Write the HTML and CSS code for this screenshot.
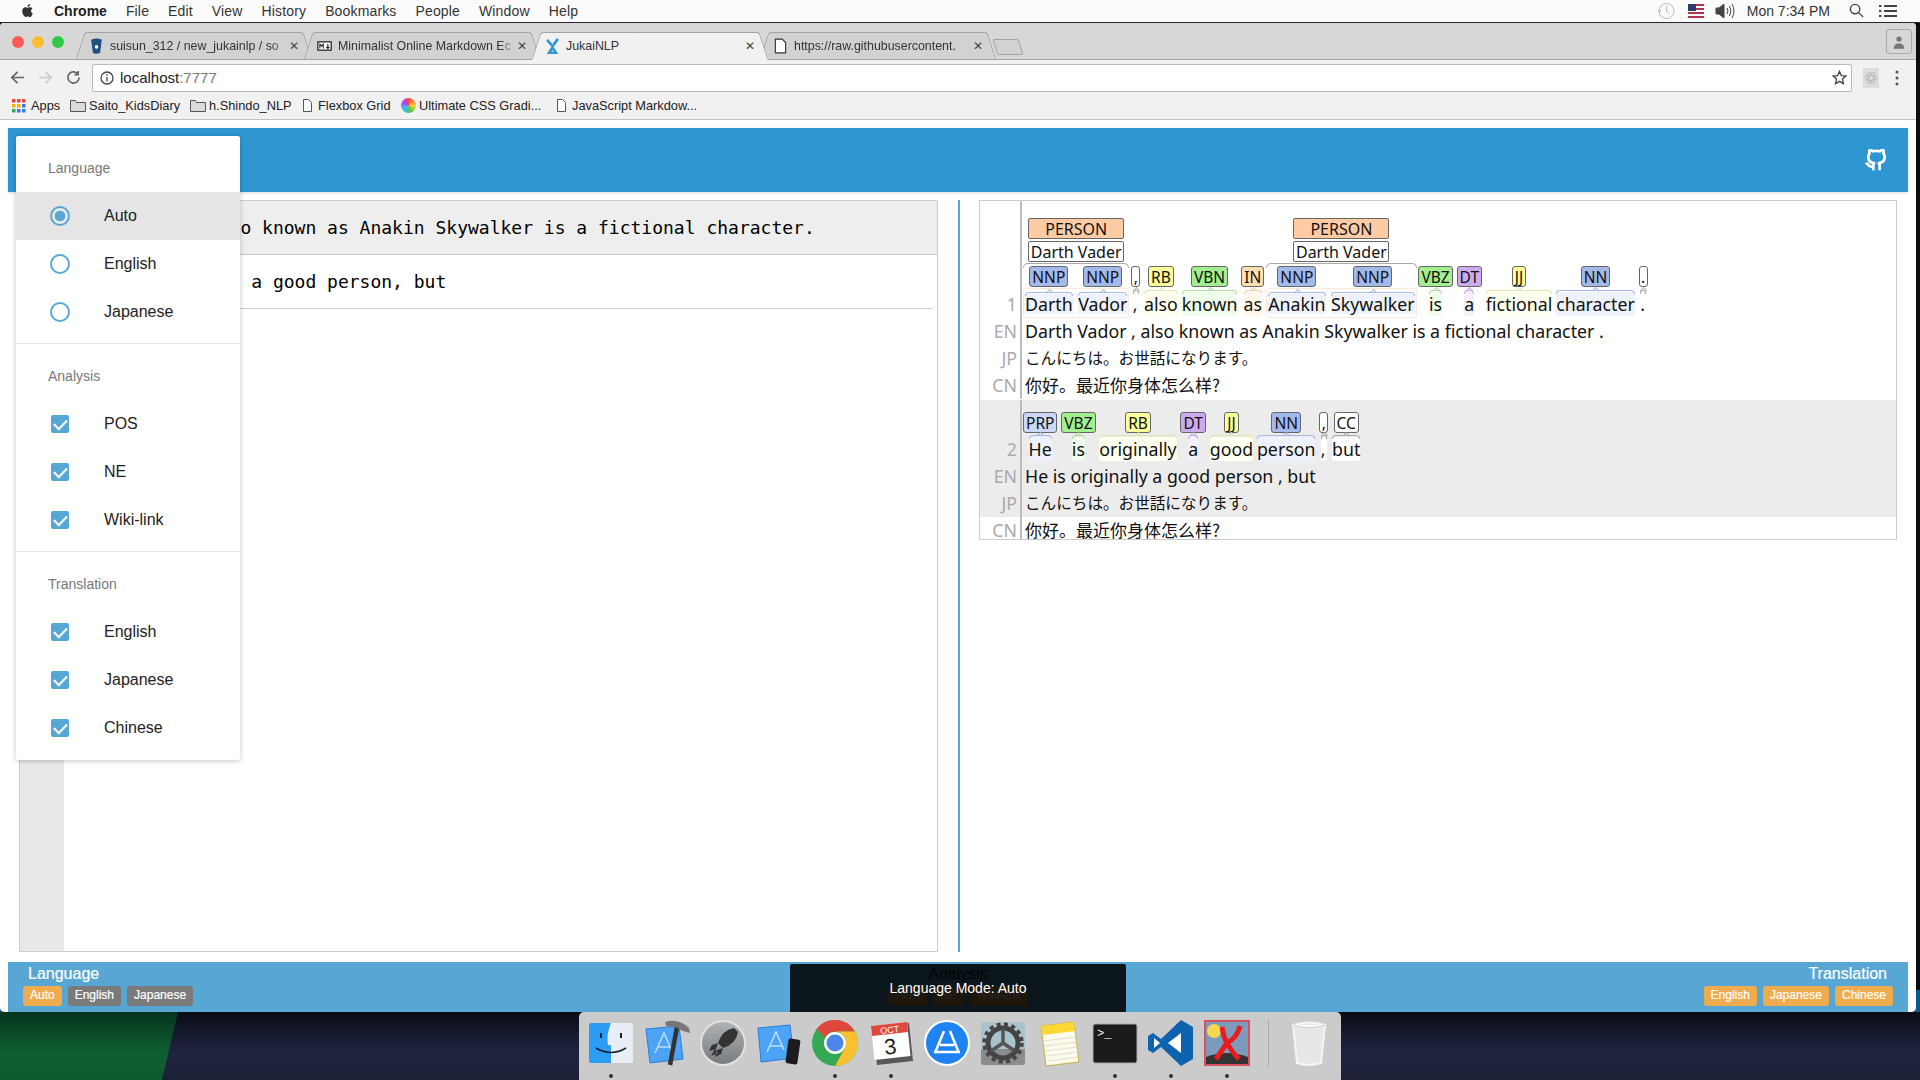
FILE: index.html
```html
<!DOCTYPE html>
<html lang="en">
<head>
    <meta charset="UTF-8">
    <meta name="viewport" content="width=device-width, initial-scale=1.0">
    <title>JukaiNLP</title>
    <link rel="stylesheet" href="styles.css">
</head>
<body>
    <!-- mac menu bar -->
    <div class="menubar">
        <svg class="apple" viewBox="0 0 24 24"><path d="M12.152 6.896c-.948 0-2.415-1.078-3.96-1.04-2.04.027-3.91 1.183-4.961 3.014-2.117 3.675-.546 9.103 1.519 12.09 1.013 1.454 2.208 3.09 3.792 3.039 1.52-.065 2.09-.987 3.935-.987 1.831 0 2.35.987 3.96.948 1.637-.026 2.676-1.48 3.676-2.948 1.156-1.688 1.636-3.325 1.662-3.415-.039-.013-3.182-1.221-3.22-4.857-.026-3.04 2.48-4.494 2.597-4.559-1.429-2.09-3.623-2.324-4.39-2.376-2-.156-3.675 1.09-4.61 1.09zM15.53 3.83c.843-1.012 1.4-2.427 1.245-3.83-1.207.052-2.662.805-3.532 1.818-.78.896-1.454 2.338-1.273 3.714 1.338.104 2.715-.688 3.559-1.701"/></svg>
        <b class="menu-app">Chrome</b>
        <span>File</span><span>Edit</span><span>View</span><span>History</span><span>Bookmarks</span><span>People</span><span>Window</span><span>Help</span>
        <div class="menu-status">
            <svg class="st-clock" viewBox="0 0 18 18"><circle cx="9.5" cy="9" r="7.5"/><path d="M9.5 4v5.5l3 2M1 8l1.5 2L4 8"/></svg>
            <svg class="st-flag" viewBox="0 0 16 14"><rect width="16" height="14" fill="#fff"/><path d="M0 1h16M0 5h16M0 9h16M0 13h16" stroke="#b5314a" stroke-width="2"/><rect width="8" height="7" fill="#33386e"/></svg>
            <svg class="st-vol" viewBox="0 0 20 16"><path class="fill" d="M1 5h3l5-4v14l-5-4H1z"/><path d="M12 5q2 3 0 6M14.500 3q3 5 0 10M17 1q4 7 0 14"/></svg>
            <span class="st-time">Mon 7:34 PM</span>
            <svg class="st-search" viewBox="0 0 16 16"><circle cx="6.500" cy="6.500" r="5"/><path d="M10 10l5 5"/></svg>
            <svg class="st-list" viewBox="0 0 18 14"><path d="M5 2h13M5 7h13M5 12h13M0 2h2.500M0 7h2.500M0 12h2.500"/></svg>
        </div>
    </div>

    <div class="window">
        <!-- chrome tabs -->
        <div class="tabstrip">
            <div class="lights"><i class="red"></i><i class="yellow"></i><i class="green"></i></div>
            <div class="tab">
                <svg class="favicon" viewBox="0 0 14 18"><path d="M1 2q6-3 12 0l-2 15q-4 1.500-8 0z" fill="#205081"/><circle cx="7" cy="10" r="2" fill="#fff"/></svg>
                <span class="tab-title fade">suisun_312 / new_jukainlp / so</span><span class="tab-x">&#10005;</span>
            </div>
            <div class="tab">
                <svg class="favicon" viewBox="0 0 18 12"><rect x="1" y="1" width="16" height="10" fill="#fff" stroke="#222" stroke-width="1.500"/><path d="M3.500 9V4l2 2 2-2v5M13 3.500v5M11 7l2 2 2-2" fill="none" stroke="#222" stroke-width="1.300"/></svg>
                <span class="tab-title fade">Minimalist Online Markdown Ec</span><span class="tab-x">&#10005;</span>
            </div>
            <div class="tab active">
                <svg class="favicon" viewBox="0 0 16 18"><path d="M2 2l5 6M14 1L9 8M8 8v3M4 17l4-6 4 6z" fill="none" stroke="#2e97d1" stroke-width="3"/></svg>
                <span class="tab-title">JukaiNLP</span><span class="tab-x">&#10005;</span>
            </div>
            <div class="tab">
                <svg class="favicon file" viewBox="0 0 11 14"><path d="M1 1h6l3 3v9H1z"/></svg>
                <span class="tab-title fade">https://raw.githubusercontent.</span><span class="tab-x">&#10005;</span>
            </div>
            <div class="newtab"></div>
            <div class="profile">
                <svg viewBox="0 0 16 20"><circle cx="8" cy="6" r="3.500"/><path d="M1 19q0-7 7-7t7 7z"/></svg>
            </div>
        </div>

        <!-- toolbar -->
        <div class="toolbar">
            <svg class="nav" viewBox="0 0 16 16"><path d="M15 8H2M8 2L2 8l6 6"/></svg>
            <svg class="nav off" viewBox="0 0 16 16"><path d="M1 8h13M8 2l6 6-6 6"/></svg>
            <svg class="nav" viewBox="0 0 16 16"><path d="M14 8a6 6 0 1 1-2-4.500M13 1v4H9"/></svg>
            <div class="omnibox">
                <svg class="info" viewBox="0 0 14 14"><circle cx="7" cy="7" r="6"/><path d="M7 6v4.500M7 3.200v1.500"/></svg>
                <span class="url">localhost<span class="url-port">:7777</span></span>
                <svg class="star" viewBox="0 0 16 16"><path d="M8 1.500l2 4.500 4.800.5-3.600 3.200 1 4.800L8 12.100l-4.200 2.400 1-4.800L1.200 6.500 6 6z"/></svg>
            </div>
            <svg class="ext" viewBox="0 0 16 20"><rect width="16" height="20" fill="#ddd"/><g fill="none" stroke="#bbb"><ellipse cx="8" cy="10" rx="6" ry="2.500"/><ellipse cx="8" cy="10" rx="6" ry="2.500" transform="rotate(60 8 10)"/><ellipse cx="8" cy="10" rx="6" ry="2.500" transform="rotate(120 8 10)"/></g></svg>
            <svg class="dots" viewBox="0 0 4 16"><circle cx="2" cy="2" r="1.500"/><circle cx="2" cy="8" r="1.500"/><circle cx="2" cy="14" r="1.500"/></svg>
        </div>

        <!-- bookmarks -->
        <div class="bookmarks">
            <div class="bm bm-apps">
                <svg class="bm-icon" viewBox="0 0 14 14"><g fill="#e04a3f"><rect width="3.500" height="3.500"/><rect x="5" width="3.500" height="3.500"/><rect x="10" width="3.500" height="3.500"/></g><g fill="#f4b400"><rect y="5" width="3.500" height="3.500"/><rect x="5" y="5" width="3.500" height="3.500"/></g><rect x="10" y="5" width="3.500" height="3.500" fill="#3b78e7"/><g fill="#34a853"><rect y="10" width="3.500" height="3.500"/></g><g fill="#3b78e7"><rect x="5" y="10" width="3.500" height="3.500"/><rect x="10" y="10" width="3.500" height="3.500"/></g></svg>
                <span>Apps</span>
            </div>
            <div class="bm bm-saito">
                <svg class="bm-icon wide" viewBox="0 0 16 13"><path d="M.5 12.500V1.500h5l1 2h9v9z" fill="#dcdcdc" stroke="#555"/></svg>
                <span>Saito_KidsDiary</span>
            </div>
            <div class="bm bm-shindo">
                <svg class="bm-icon wide" viewBox="0 0 16 13"><path d="M.5 12.500V1.500h5l1 2h9v9z" fill="#dcdcdc" stroke="#555"/></svg>
                <span>h.Shindo_NLP</span>
            </div>
            <div class="bm bm-flex">
                <svg class="bm-icon small" viewBox="0 0 9 13"><path d="M.5.500h5l3 3v9H.5z" fill="#fff" stroke="#555"/></svg>
                <span>Flexbox Grid</span>
            </div>
            <div class="bm bm-css">
                <span class="bm-grad"></span>
                <span>Ultimate CSS Gradi...</span>
            </div>
            <div class="bm">
                <svg class="bm-icon small" viewBox="0 0 9 13"><path d="M.5.500h5l3 3v9H.5z" fill="#fff" stroke="#555"/></svg>
                <span>JavaScript Markdow...</span>
            </div>
        </div>

        <!-- the page itself -->
        <div class="page">
            <header class="appbar">
                <svg class="github" viewBox="0 0 24 24"><path d="M9 19c-5 1.500-5-2.500-7-3m14 6v-3.870a3.370 3.370 0 0 0-.94-2.610c3.140-.35 6.440-1.540 6.440-7A5.440 5.440 0 0 0 20 4.770 5.070 5.070 0 0 0 19.910 1S18.730.65 16 2.480a13.380 13.380 0 0 0-7 0C6.270.65 5.090 1 5.090 1A5.070 5.070 0 0 0 5 4.770a5.440 5.440 0 0 0-1.500 3.750c0 5.420 3.300 6.610 6.440 7A3.370 3.370 0 0 0 9 18.130V22"/></svg>
            </header>

            <main class="workspace">
                <section class="editor">
                    <div class="editor-line current"><span class="editor-num">1</span><span class="editor-text">Darth Vador, also known as Anakin Skywalker is a fictional character.</span></div>
                    <div class="editor-line"><span class="editor-num">2</span><span class="editor-text">He is originally a good person, but</span></div>
                </section>
                <div class="divider"></div>
                <section class="result">
                    <div class="sentence">
                        <div class="line line-tokens">
                            <div class="num">1</div>
                            <div class="tokens">
                                <div class="ne">
                                    <div class="ne-type">PERSON</div>
                                    <div class="ne-link">Darth Vader</div>
                                    <div class="ne-tokens">
                                        <div class="tok"><span class="pos nn">NNP</span><span class="word w-nn">Darth</span></div>
                                        <div class="tok"><span class="pos nn">NNP</span><span class="word w-nn">Vador</span></div>
                                    </div>
                                </div>
                                <div class="tok"><span class="pos plain">,</span><span class="word w-plain">,</span></div>
                                <div class="tok"><span class="pos rb">RB</span><span class="word w-rb">also</span></div>
                                <div class="tok"><span class="pos vb">VBN</span><span class="word w-vb">known</span></div>
                                <div class="tok"><span class="pos in">IN</span><span class="word w-in">as</span></div>
                                <div class="ne">
                                    <div class="ne-type">PERSON</div>
                                    <div class="ne-link">Darth Vader</div>
                                    <div class="ne-tokens">
                                        <div class="tok"><span class="pos nn">NNP</span><span class="word w-nn">Anakin</span></div>
                                        <div class="tok"><span class="pos nn">NNP</span><span class="word w-nn">Skywalker</span></div>
                                    </div>
                                </div>
                                <div class="tok"><span class="pos vb">VBZ</span><span class="word w-vb">is</span></div>
                                <div class="tok"><span class="pos dt">DT</span><span class="word w-dt">a</span></div>
                                <div class="tok"><span class="pos rb">JJ</span><span class="word w-rb">fictional</span></div>
                                <div class="tok"><span class="pos nn">NN</span><span class="word w-nn">character</span></div>
                                <div class="tok"><span class="pos plain">.</span><span class="word w-plain">.</span></div>
                            </div>
                        </div>
                        <div class="line"><div class="num">EN</div><div class="text">Darth Vador , also known as Anakin Skywalker is a fictional character .</div></div>
                        <div class="line"><div class="num">JP</div><div class="text jp">こんにちは。お世話になります。</div></div>
                        <div class="line"><div class="num">CN</div><div class="text cn">你好。最近你身体怎么样?</div></div>
                    </div>
                    <div class="sentence alt">
                        <div class="line line-tokens">
                            <div class="num">2</div>
                            <div class="tokens">
                                <div class="tok"><span class="pos prp">PRP</span><span class="word w-nn">He</span></div>
                                <div class="tok"><span class="pos vb">VBZ</span><span class="word w-vb">is</span></div>
                                <div class="tok"><span class="pos rb">RB</span><span class="word w-rb">originally</span></div>
                                <div class="tok"><span class="pos dt">DT</span><span class="word w-dt">a</span></div>
                                <div class="tok"><span class="pos rb">JJ</span><span class="word w-rb">good</span></div>
                                <div class="tok"><span class="pos nn">NN</span><span class="word w-nn">person</span></div>
                                <div class="tok"><span class="pos plain">,</span><span class="word w-plain">,</span></div>
                                <div class="tok"><span class="pos plain cc">CC</span><span class="word w-plain">but</span></div>
                            </div>
                        </div>
                        <div class="line"><div class="num">EN</div><div class="text">He is originally a good person , but</div></div>
                        <div class="line"><div class="num">JP</div><div class="text jp">こんにちは。お世話になります。</div></div>
                        <div class="line last"><div class="num">CN</div><div class="text cn">你好。最近你身体怎么样?</div></div>
                    </div>
                </section>
            </main>

            <footer class="statusbar">
                <div class="group">
                    <div class="group-title">Language</div>
                    <div class="chips"><span class="chip">Auto</span><span class="chip off">English</span><span class="chip off">Japanese</span></div>
                </div>
                <div class="group center">
                    <div class="group-title">Analysis</div>
                    <div class="chips"><span class="chip">POS</span><span class="chip">NE</span><span class="chip">Wiki-link</span></div>
                </div>
                <div class="group right">
                    <div class="group-title">Translation</div>
                    <div class="chips"><span class="chip">English</span><span class="chip">Japanese</span><span class="chip">Chinese</span></div>
                </div>
            </footer>
        </div>

        <!-- settings drawer, opened over the page -->
        <nav class="drawer">
            <div class="drawer-group">
                <div class="drawer-head">Language</div>
                <div class="drawer-item selected"><span class="radio on"></span>Auto</div>
                <div class="drawer-item"><span class="radio"></span>English</div>
                <div class="drawer-item"><span class="radio"></span>Japanese</div>
            </div>
            <div class="drawer-group">
                <div class="drawer-head">Analysis</div>
                <div class="drawer-item"><span class="check"></span>POS</div>
                <div class="drawer-item"><span class="check"></span>NE</div>
                <div class="drawer-item"><span class="check"></span>Wiki-link</div>
            </div>
            <div class="drawer-group">
                <div class="drawer-head">Translation</div>
                <div class="drawer-item"><span class="check"></span>English</div>
                <div class="drawer-item"><span class="check"></span>Japanese</div>
                <div class="drawer-item"><span class="check"></span>Chinese</div>
            </div>
        </nav>

        <div class="toast">Language Mode: Auto</div>
    </div>

    <div class="wallpaper"></div>

    <!-- dock -->
    <div class="dock">
        <div class="dock-item running">
            <svg viewBox="0 0 48 48"><rect x="2" y="4" width="44" height="40" rx="2" fill="#e8eef3"/><path d="M4 4h20q-5 12-3 22h3v18H4a2 2 0 0 1-2-2V6a2 2 0 0 1 2-2z" fill="#2b9df4"/><path d="M14 14v5M34 14v5" stroke="#123" stroke-width="2"/><path d="M9 29q15 9 30 0" fill="none" stroke="#123" stroke-width="1.500"/></svg>
        </div>
        <div class="dock-item">
            <svg viewBox="0 0 48 48"><path d="M3 10l33-3 4 33-33 4z" fill="#4da3f5" stroke="#2b7fd6"/><path d="M12 34l9-20 8 18M15 28h12" fill="none" stroke="#bfe0ff" stroke-width="1.500"/><path d="M34 8L27 46" stroke="#333" stroke-width="4.500"/><path d="M22 3q13-4 24 6l1 5-7-2-8-4-9-1z" fill="#777"/></svg>
        </div>
        <div class="dock-item">
            <svg viewBox="0 0 48 48"><defs><linearGradient id="lp" x1="0" y1="0" x2="0" y2="1"><stop offset="0" stop-color="#b0b4b6"/><stop offset="1" stop-color="#777b7e"/></linearGradient></defs><circle cx="24" cy="24" r="22" fill="url(#lp)" stroke="#e2e2e2" stroke-width="2"/><path d="M35 9q-12 2-16 15l5 5q13-4 15-16zM19 24l-6 2-3 6 7-2zM24 29l-2 6-6 3 2-7zM16 30l-4 7 7-3z" fill="#333335"/></svg>
        </div>
        <div class="dock-item">
            <svg viewBox="0 0 48 48"><path d="M3 9l32-3 4 33-33 4z" fill="#4da3f5" stroke="#2b7fd6"/><path d="M12 33l9-20 8 18M15 27h12" fill="none" stroke="#bfe0ff" stroke-width="1.500"/><rect x="32" y="20" width="12" height="25" rx="2" transform="rotate(8 38 32)" fill="#1c1c1e"/></svg>
        </div>
        <div class="dock-item running">
            <svg viewBox="0 0 48 48"><circle cx="24" cy="24" r="23" fill="#34a853"/><path d="M24 1a23 23 0 0 1 20 11.500H24a11.500 11.500 0 0 0-10 6L5.500 10A23 23 0 0 1 24 1z" fill="#e0483e"/><path d="M44 12.500A23 23 0 0 1 24 47l10-18a11.500 11.500 0 0 0-10-16.500z" fill="#fbc02d"/><circle cx="24" cy="24" r="11" fill="#fff"/><circle cx="24" cy="24" r="8.500" fill="#4a86e8"/></svg>
        </div>
        <div class="dock-item running">
            <svg viewBox="0 0 48 48"><path d="M6 8l36-4 4 38-36 4z" fill="#58595b"/><path d="M4 7l36-4 3.500 34-36 4z" fill="#fff"/><path d="M4 7l36-4 1 10-36 4z" fill="#e0483e"/><text class="cal-month" x="23" y="14" transform="rotate(-6 23 14)">OCT</text><text class="cal-day" x="24" y="35" transform="rotate(-6 24 35)">3</text></svg>
        </div>
        <div class="dock-item">
            <svg viewBox="0 0 48 48"><circle cx="24" cy="24" r="22" fill="#1f83f2" stroke="#fff" stroke-width="2"/><path d="M11 33h26M27 12l9 22M21 12l-9 22M17 26h14" stroke="#fff" stroke-width="2.500" fill="none"/></svg>
        </div>
        <div class="dock-item">
            <svg viewBox="0 0 48 48"><rect x="2" y="3" width="44" height="43" rx="3" fill="#a9c3cc"/><path d="M2 30h44v13a3 3 0 0 1-3 3H5a3 3 0 0 1-3-3z" fill="#8a8d8f"/><circle cx="24" cy="24" r="15" fill="none" stroke="#444" stroke-width="5"/><circle cx="24" cy="24" r="19" fill="none" stroke="#444" stroke-width="3.500" stroke-dasharray="4 3.500"/><path d="M24 24V10M24 24l12 8M24 24l-12 8" stroke="#555" stroke-width="3.500"/></svg>
        </div>
        <div class="dock-item">
            <svg viewBox="0 0 48 48"><path d="M6 7l33-4 5 40-33 4z" fill="#fdfbe8" stroke="#c9ac4a"/><path d="M6 7l33-4 1.200 9-33 4z" fill="#fdd835"/><path d="M9 22l32-4M10 27l32-4M10.500 32l32-4M11 37l32-4M12 42l31-4" stroke="#ddd"/></svg>
        </div>
        <div class="dock-item running">
            <svg viewBox="0 0 48 48"><rect x="2" y="5" width="44" height="39" rx="2" fill="#1b1b1b" stroke="#aaa"/><text class="term-text" x="6" y="18">&gt;_</text></svg>
        </div>
        <div class="dock-item running">
            <svg viewBox="0 0 48 48"><path d="M34 1l12 7v32l-12 7-20-19-8 6-5-3V17l5-3 8 6z" fill="#0e63b0"/><path d="M34 14v20L21 24z" fill="#fff"/><path d="M7 19l6 5-6 5z" fill="#fff"/></svg>
        </div>
        <div class="dock-item running">
            <svg viewBox="0 0 48 48"><rect x="2" y="2" width="44" height="44" fill="#7d9cbd" stroke="#d8505e" stroke-width="2"/><circle cx="11" cy="12" r="7" fill="#f5d94e"/><path d="M3 38q20-8 42 0v7H3z" fill="#333"/><path d="M19 8q2 12 5 16-5 7-11 16M37 7q-3 12-13 17 4 8 12 16" fill="none" stroke="#e81c1c" stroke-width="5"/></svg>
        </div>
        <div class="dock-sep"></div>
        <div class="dock-item">
            <svg viewBox="0 0 48 48"><path d="M8 6q16-5 32 0l-4 38q-12 4-24 0z" fill="#e6e8e8" stroke="#f5f5f5" stroke-width="2"/><path d="M8 6q16 5 32 0" fill="#fff" stroke="#ccc"/></svg>
        </div>
    </div>
</body>
</html>
```

FILE: styles.css
```css
* {
    box-sizing: border-box;
}
body {
    margin: 0;
    width: 1920px;
    height: 1080px;
    overflow: hidden;
    position: relative;
    display: flex;
    flex-direction: column;
    font-family: "Liberation Sans", Arial, sans-serif;
    background: linear-gradient(#0d0d10 0, #0d0d10 990px, #0b5a8d 990px);
}

/* menu bar */
.menubar {
    height: 23px;
    flex: none;
    display: flex;
    align-items: center;
    gap: 19px;
    padding-left: 21px;
    padding-bottom: 1px;
    background: #fbfbfb;
    border-bottom: 1px solid #262430;
    font-size: 14px;
    letter-spacing: 0.15px;
    color: #333;
}
.apple {
    width: 13px;
    height: 15px;
    fill: #333;
    margin-right: 1px;
}
.menu-app {
    color: #222;
    letter-spacing: 0;
}
.menu-status {
    margin-left: auto;
    display: flex;
    align-items: center;
    padding-right: 23px;
}
.menu-status svg {
    fill: none;
    stroke: #444;
}
.st-clock {
    width: 18px;
    height: 18px;
    margin-right: 13px;
    stroke: #bbb !important;
}
.st-flag {
    width: 16px;
    height: 14px;
    margin-right: 11px;
    stroke: none !important;
}
.st-vol {
    width: 20px;
    height: 16px;
    margin-right: 12px;
}
.st-vol .fill {
    fill: #444;
}
.st-time {
    margin-right: 19px;
    letter-spacing: 0;
}
.st-search {
    width: 15px;
    height: 15px;
    margin-right: 15px;
    stroke-width: 1.5;
}
.st-list {
    width: 18px;
    height: 14px;
    stroke-width: 2;
}

/* browser window */
.window {
    position: relative;
    flex: none;
    width: 1916px;
    height: 989px;
    background: #fff;
    border-radius: 4px 4px 5px 5px;
    overflow: hidden;
}
.tabstrip {
    height: 37px;
    display: flex;
    align-items: flex-end;
    padding-left: 75px;
    position: relative;
    background: #d7d7d7;
    border-bottom: 1px solid #a3a3a3;
}
.lights {
    position: absolute;
    left: 12px;
    top: 13px;
    display: flex;
    gap: 8px;
}
.lights i {
    width: 12px;
    height: 12px;
    border-radius: 50%;
}
.red { background: #fc5b57; }
.yellow { background: #fdbd2f; }
.green { background: #33c748; }

.tab {
    position: relative;
    width: 238px;
    height: 28px;
    margin-right: -10px;
    margin-bottom: -1px;
    padding: 0 14px;
    display: flex;
    align-items: center;
    font-size: 12.4px;
    color: #333;
    z-index: 1;
}
.tab::before,
.tab::after {
    content: "";
    position: absolute;
    top: 0;
    bottom: 0;
    width: 50%;
    z-index: -1;
    background: #d2d2d2;
    border-top: 1px solid #a3a3a3;
    border-bottom: 1px solid #a3a3a3;
}
.tab::before {
    left: 5px;
    transform: skewX(-18deg);
    border-left: 1px solid #a3a3a3;
    border-radius: 3px 0 0 0;
}
.tab::after {
    right: 5px;
    transform: skewX(18deg);
    border-right: 1px solid #a3a3a3;
    border-radius: 0 3px 0 0;
}
.tab.active {
    z-index: 2;
}
.tab.active::before,
.tab.active::after {
    background: #f1f1f1;
    border-bottom-color: #f1f1f1;
}
.favicon {
    flex: none;
    width: 15px;
    height: 16px;
    margin-right: 6px;
}
.favicon.file {
    fill: #fff;
    stroke: #333;
}
.tab-title {
    flex: 1;
    white-space: nowrap;
}
.tab-title.fade {
    -webkit-mask-image: linear-gradient(90deg, #000 90%, transparent 100%);
    mask-image: linear-gradient(90deg, #000 90%, transparent 100%);
}
.tab-x {
    flex: none;
    font-size: 12px;
    color: #444;
}
.newtab {
    width: 26px;
    height: 16px;
    margin: 0 0 4px 8px;
    transform: skewX(18deg);
    border: 1px solid #a3a3a3;
    border-radius: 2px;
    background: #d2d2d2;
}
.profile {
    position: absolute;
    right: 4px;
    top: 6px;
    width: 26px;
    height: 25px;
    border: 1px solid #aaa;
    border-radius: 3px;
    display: flex;
    align-items: center;
    justify-content: center;
}
.profile svg {
    width: 12px;
    height: 16px;
    fill: #777;
}

.toolbar {
    height: 33px;
    display: flex;
    align-items: center;
    padding: 2px 10px 0 10px;
    background: #f1f1f1;
}
.nav {
    flex: none;
    width: 15px;
    height: 15px;
    margin-right: 13px;
    fill: none;
    stroke: #666;
    stroke-width: 1.8;
}
.nav.off {
    stroke: #ccc;
}
.omnibox {
    flex: none;
    width: 1760px;
    height: 28px;
    margin-left: -2px;
    display: flex;
    align-items: center;
    padding: 0 4px 0 7px;
    background: #fff;
    border: 1px solid #bbb;
    border-radius: 2px;
}
.info {
    width: 14px;
    height: 14px;
    margin-right: 6px;
    fill: none;
    stroke: #444;
    stroke-width: 1.3;
}
.url {
    font-size: 15px;
    color: #222;
}
.url-port {
    color: #777;
}
.star {
    margin-left: auto;
    width: 15px;
    height: 15px;
    fill: none;
    stroke: #444;
    stroke-width: 1.4;
}
.ext {
    flex: none;
    width: 16px;
    height: 20px;
    margin-left: 11px;
}
.dots {
    flex: none;
    width: 4px;
    height: 16px;
    margin-left: 16px;
    fill: #555;
}

.bookmarks {
    height: 27px;
    display: flex;
    align-items: center;
    padding: 0 0 1px 12px;
    background: #f1f1f1;
    border-bottom: 1px solid #c2c2c2;
    font-size: 12.8px;
    color: #222;
}
.bm {
    display: flex;
    align-items: center;
    white-space: nowrap;
}
.bm-apps { width: 58px; }
.bm-saito { width: 120px; }
.bm-shindo { width: 113px; }
.bm-flex { width: 98px; }
.bm-css { width: 156px; }
.bm-icon {
    flex: none;
    width: 14px;
    height: 14px;
    margin-right: 5px;
}
.bm-icon.wide {
    width: 16px;
    height: 13px;
    margin-right: 3px;
}
.bm-icon.small {
    width: 9px;
    height: 13px;
    margin-right: 6px;
}
.bm-grad {
    flex: none;
    width: 15px;
    height: 15px;
    margin-right: 3px;
    border-radius: 50%;
    background: conic-gradient(#f44 0, #fc3 25%, #4c4 45%, #4bf 65%, #a4f 85%, #f44 100%);
}

/* page */
.page {
    padding: 8px 8px 0;
    background: #fff;
}
.appbar {
    height: 64px;
    display: flex;
    align-items: center;
    justify-content: flex-end;
    padding-right: 21px;
    background: #2e97d1;
    box-shadow: 0 1px 3px rgba(0, 0, 0, 0.15);
}
.github {
    width: 22px;
    height: 22px;
    fill: none;
    stroke: #fff;
    stroke-width: 3;
    stroke-linecap: round;
    stroke-linejoin: round;
}
.workspace {
    display: flex;
    align-items: flex-start;
    height: 752px;
    margin-top: 8px;
    padding: 0 11px;
}
.editor {
    flex: none;
    width: 919px;
    height: 752px;
    background: linear-gradient(90deg, #e9e9e9 44px, #fff 44px);
    border: 1px solid #ccc;
    font-family: "DejaVu Sans Mono", monospace;
    font-size: 18px;
    color: #000;
}
.editor-line {
    height: 54px;
    display: flex;
    align-items: center;
    border-bottom: 1px solid #ccc;
    margin-right: 4px;
}
.editor-line.current {
    background: #eee;
    margin-right: 0;
}
.editor-num {
    width: 44px;
    padding-right: 8px;
    text-align: right;
    color: #aaa;
}
.editor-text {
    padding-left: 3px;
    white-space: pre;
}
.divider {
    flex: none;
    width: 2px;
    height: 752px;
    margin: 0 19px 0 20px;
    background: #57a6d3;
}
.result {
    flex: none;
    width: 918px;
    height: 340px;
    overflow: hidden;
    border: 1px solid #ccc;
    font-family: "Noto Sans", "Noto Sans CJK JP", sans-serif;
    font-size: 17.75px;
    color: #111;
}
.sentence {
    padding-bottom: 1px;
}
.sentence.alt {
    padding-bottom: 0;
    background: #ececec;
}
.line {
    display: flex;
    min-height: 27px;
    line-height: 27px;
}
.line.last {
    background: #fff;
    height: 21px;
}
.num {
    flex: none;
    width: 42px;
    padding-right: 3px;
    text-align: right;
    color: #aaa;
    border-right: 2px solid #bbb;
}
.line-tokens .num {
    display: flex;
    align-items: flex-end;
    justify-content: flex-end;
    padding-bottom: 2px;
    line-height: 24px;
}
.text {
    padding-left: 3px;
    white-space: nowrap;
}
.jp {
    font-family: "Noto Sans CJK JP", sans-serif;
    font-size: 15.6px;
    line-height: 25px;
}
.cn {
    font-family: "Noto Sans CJK SC", sans-serif;
    font-size: 17px;
    line-height: 25px;
}

/* annotated tokens */
.tokens {
    display: flex;
    align-items: flex-end;
    gap: 3.85px;
    padding: 17px 0 2px 3px;
    line-height: 1;
}
.alt .tokens {
    padding-top: 12px;
    padding-left: 1px;
}
.tok {
    display: flex;
    flex-direction: column;
    align-items: center;
}
.pos {
    height: 21px;
    min-width: 9px;
    padding: 0 2px;
    margin-bottom: 5px;
    border: 1px solid #666;
    border-radius: 3px;
    font-size: 15.5px;
    line-height: 20px;
    text-align: center;
}
.alt .pos {
    margin-bottom: 4px;
}
.pos.nn { background: #a3b9ea; }
.pos.prp { background: #ccd8f4; }
.pos.rb { background: #ffff9c; }
.pos.vb { background: #a2ee90; }
.pos.in { background: #ffdfae; }
.pos.dt { background: #ccaaee; }
.pos.plain { background: #fff; padding: 0 1px; }
.pos.plain.cc { padding: 0 2px; }
.word {
    position: relative;
    height: 24px;
    line-height: 24px;
    white-space: nowrap;
    border-radius: 3px;
    background: var(--bg);
}
.word::before {
    content: "";
    position: absolute;
    left: 0;
    right: 0;
    top: -2px;
    height: 3px;
    border: 1px solid var(--brace);
    border-bottom: 0;
    border-radius: 4px 4px 0 0;
}
.word::after {
    content: "";
    position: absolute;
    left: 50%;
    top: -4px;
    width: 4px;
    height: 4px;
    margin-left: -2px;
    transform: rotate(45deg);
    border-top: 1px solid var(--brace);
    border-left: 1px solid var(--brace);
}
.w-nn { --bg: #eef2fc; --brace: #a3b9ea; }
.w-rb { --bg: #fffff0; --brace: #e6e6a8; }
.w-vb { --bg: #f0fcec; --brace: #a8e098; }
.w-in { --bg: #fff7ea; --brace: #f0d4a6; }
.w-dt { --bg: #f6f0fd; --brace: #c4a8e8; }
.w-plain { --bg: #fff; --brace: #aaa; min-width: 6px; }

.ne {
    display: flex;
    flex-direction: column;
    align-items: center;
}
.ne-type,
.ne-link {
    width: 96px;
    height: 21px;
    border: 1px solid #666;
    border-radius: 2px;
    font-size: 16px;
    line-height: 20px;
    text-align: center;
}
.ne-type {
    background: #ffcba4;
    margin-bottom: 2px;
}
.ne-link {
    background: #fff;
    margin-bottom: 4px;
}
.ne-tokens {
    position: relative;
    display: flex;
    gap: 5.5px;
}
.ne-tokens::before {
    content: "";
    position: absolute;
    left: -2px;
    right: -2px;
    top: -3px;
    height: 4px;
    border: 1px solid #aaa;
    border-bottom: 0;
    border-radius: 5px 5px 0 0;
}
.ne-tokens::after {
    content: "";
    position: absolute;
    left: -2px;
    right: -2px;
    bottom: -2px;
    height: 28px;
    border: 1px solid #ffe9de;
    border-radius: 3px;
}
.ne .word {
    border-top: 2px solid transparent;
    border-bottom: 2px solid transparent;
    background-clip: padding-box;
    line-height: 20px;
}

/* status bar */
.statusbar {
    height: 50px;
    margin-top: 10px;
    display: grid;
    grid-template-columns: 1fr auto 1fr;
    padding: 3px 15px 0;
    background: #57a6d3;
    color: #fff;
}
.group-title {
    height: 19px;
    padding: 0 5px;
    font-size: 16px;
    line-height: 17px;
    -webkit-text-stroke: 0.2px #fff;
}
.center .group-title {
    text-align: center;
    color: #222;
    -webkit-text-stroke: 0;
}
.right .group-title {
    text-align: right;
    padding-right: 6px;
}
.chips {
    display: flex;
    gap: 6px;
    margin-top: 2px;
}
.right .chips {
    justify-content: flex-end;
}
.chip {
    height: 20px;
    padding: 0 7px;
    border-radius: 3px;
    background: #efac4e;
    font-size: 12px;
    line-height: 19px;
    -webkit-text-stroke: 0.2px #fff;
}
.chip.off {
    background: #7a7a7a;
}

/* drawer */
.drawer {
    position: absolute;
    left: 16px;
    top: 113px;
    width: 224px;
    height: 624px;
    padding: 8px 0;
    background: #fff;
    border-radius: 2px;
    box-shadow: 0 1px 6px rgba(0, 0, 0, 0.12), 0 1px 4px rgba(0, 0, 0, 0.12);
    z-index: 5;
}
.drawer-group + .drawer-group {
    margin-top: 7px;
    padding-top: 8px;
    border-top: 1px solid #e3e3e3;
}
.drawer-head {
    height: 48px;
    padding-left: 32px;
    font-size: 14px;
    line-height: 48px;
    color: #777;
}
.drawer-item {
    height: 48px;
    display: flex;
    align-items: center;
    padding-left: 35px;
    font-size: 16px;
    color: #222;
}
.drawer-item.selected {
    background: #e5e5e5;
}
.radio,
.check {
    flex: none;
    margin-right: 35px;
}
.radio {
    width: 20px;
    height: 20px;
    margin-left: -1px;
    margin-right: 34px;
    border: 2px solid #57a6d3;
    border-radius: 50%;
}
.radio.on {
    background: radial-gradient(circle, #57a6d3 5px, transparent 5.5px);
}
.check {
    position: relative;
    width: 18px;
    height: 18px;
    margin-right: 35px;
    border-radius: 2px;
    background: #57a6d3;
}
.check::after {
    content: "";
    position: absolute;
    left: 3px;
    top: 4px;
    width: 11px;
    height: 6px;
    border-left: 2px solid #fff;
    border-bottom: 2px solid #fff;
    transform: rotate(-45deg);
}

/* toast */
.toast {
    position: absolute;
    left: 790px;
    bottom: 0;
    width: 336px;
    height: 48px;
    display: flex;
    align-items: center;
    justify-content: center;
    border-radius: 2px 2px 0 0;
    background: rgba(0, 0, 0, 0.87);
    color: #fff;
    font-size: 14px;
    z-index: 6;
}

/* desktop */
.wallpaper {
    position: relative;
    flex: 1;
    background: linear-gradient(#0a0c16, #1f2540 60%, #1b2036);
}
.wallpaper::before {
    content: "";
    position: absolute;
    inset: 0;
    clip-path: polygon(0 0, 178px 0, 162px 100%, 0 100%);
    background: linear-gradient(#06341d, #0e5f33 60%, #0d5a31);
}
.dock {
    position: absolute;
    left: 579px;
    bottom: 0;
    width: 762px;
    height: 68px;
    display: flex;
    padding: 6px 0 0 4px;
    background: #cbcbcb;
    border-radius: 5px 5px 0 0;
}
.dock-item {
    position: relative;
    flex: none;
    width: 56px;
    height: 50px;
    display: flex;
    justify-content: center;
}
.dock-item svg {
    width: 48px;
    height: 50px;
}
.dock-item.running::after {
    content: "";
    position: absolute;
    left: 26px;
    top: 56px;
    width: 4px;
    height: 4px;
    border-radius: 50%;
    background: #333;
}
.dock-sep {
    flex: none;
    width: 1px;
    height: 47px;
    margin: 2px 12px 0 13px;
    background: #aaa;
}
.cal-month {
    font-family: "Liberation Sans", sans-serif;
    font-size: 9px;
    fill: #fff;
    text-anchor: middle;
}
.cal-day {
    font-family: "Liberation Sans", sans-serif;
    font-size: 22px;
    fill: #222;
    text-anchor: middle;
}
.term-text {
    font-family: "Liberation Mono", monospace;
    font-size: 12px;
    fill: #eee;
}
```
